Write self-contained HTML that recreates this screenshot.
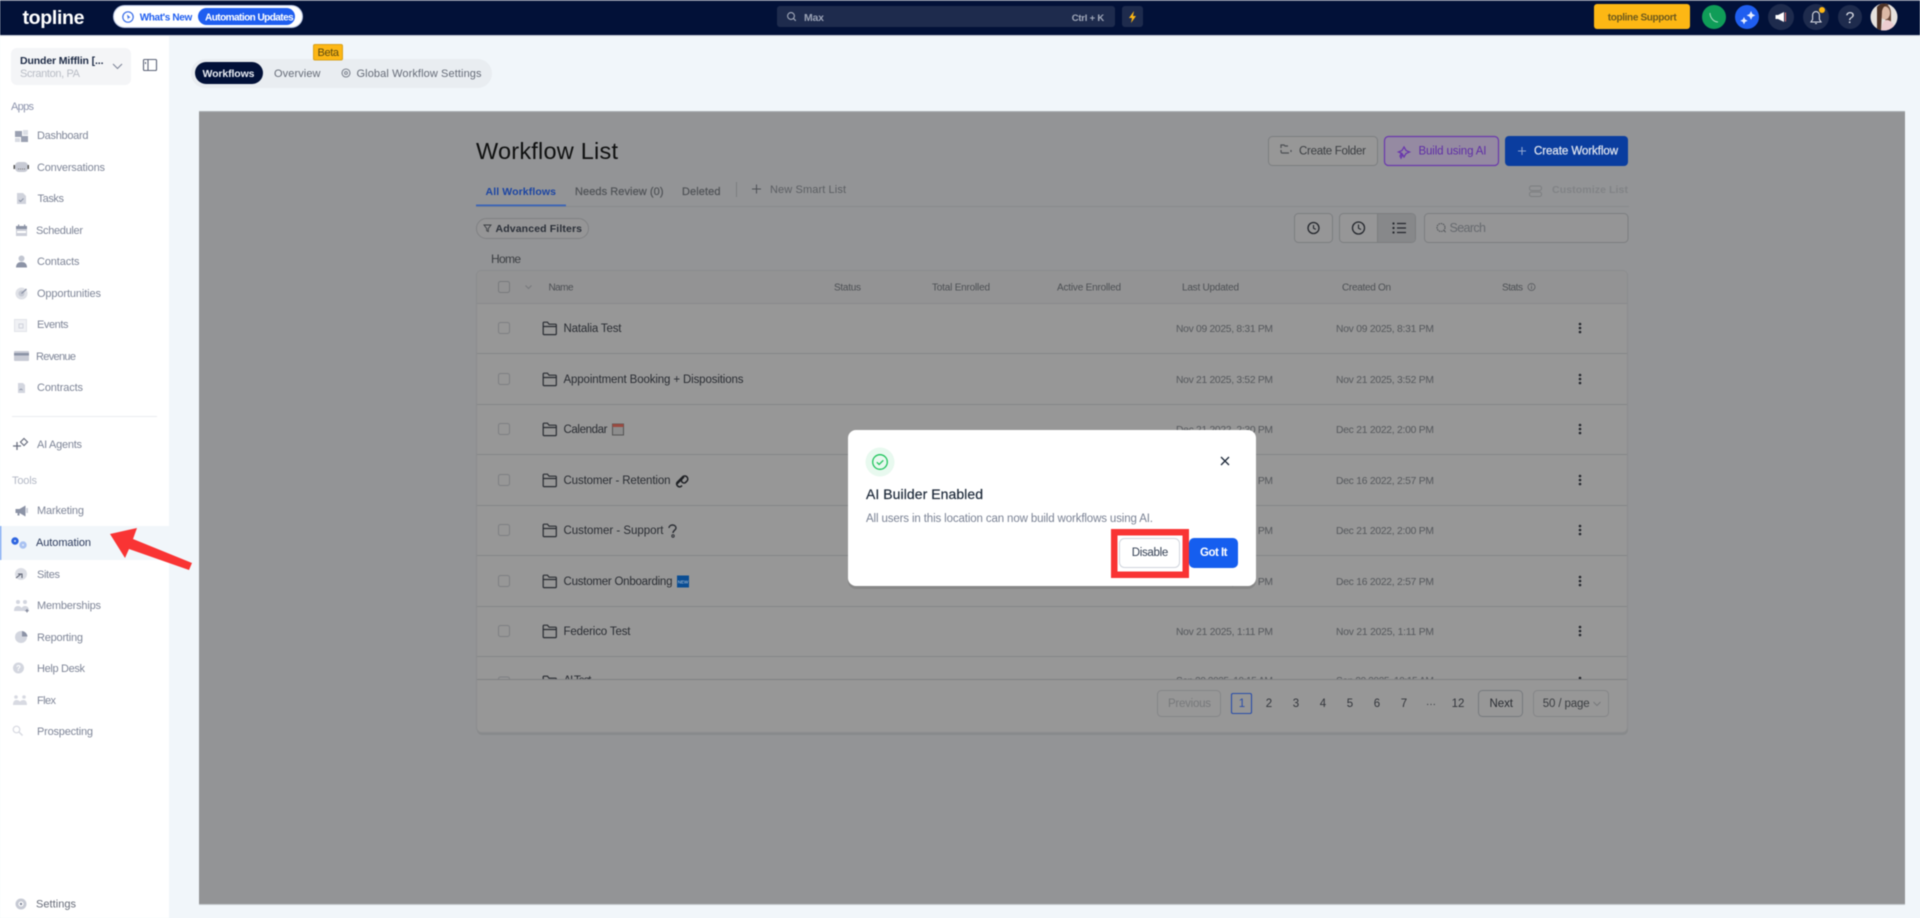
<!DOCTYPE html>
<html lang="en">
<head>
<meta charset="utf-8">
<title>Workflow List</title>
<style>
html,body{margin:0;padding:0;width:1920px;height:918px;overflow:hidden;background:#f1f6fa}
svg{display:block;filter:blur(.45px)}
text{font-family:"Liberation Sans",Arial,sans-serif;white-space:pre}
.s{font-size:11px;fill:#7f8698}
.h{font-size:10px;fill:#4d5054}
.r{font-size:11.5px;fill:#2a2d33}
.d{font-size:10.3px;fill:#55585c}
.p{font-size:11.5px;fill:#33363c;text-anchor:middle}
</style>
</head>
<body>
<svg width="1920" height="918" viewBox="0 0 1920 918" xmlns="http://www.w3.org/2000/svg">
<rect width="1920" height="918" fill="#f1f6fa"/>
<!-- top bar -->
<rect width="1920" height="35" fill="#021138"/>
<rect width="1920" height="1" fill="#6d7489"/>
<rect y="35" width="1920" height="1" fill="#c9ced8"/>
<text x="22.5" y="24" font-size="19.5" font-weight="700" fill="#fff" textLength="62">topline</text>
<rect x="113.5" y="5.5" width="189" height="22" rx="11" fill="#fff" stroke="#b9c6e4"/>
<rect x="198" y="8" width="97" height="17" rx="8.5" fill="#1f5ef0"/>
<circle cx="128" cy="17" r="5.2" fill="none" stroke="#3b6fe8" stroke-width="1.2"/>
<path d="M127 14.5l3.5 3-2 .5-.5 2z" fill="#3b6fe8"/>
<text x="139.7" y="20.5" font-size="10" font-weight="700" fill="#1f5ef0" textLength="52.6">What's New</text>
<text x="205" y="20.5" font-size="10" font-weight="700" fill="#fff" textLength="88.7">Automation Updates</text>
<!-- search -->
<rect x="777" y="6" width="338" height="21" rx="3" fill="#1e2b4d"/>
<circle cx="791" cy="16" r="3.4" fill="none" stroke="#a3aabb" stroke-width="1.1"/>
<path d="M793.5 18.5l2.3 2.3" stroke="#a3aabb" stroke-width="1.1"/>
<text x="804" y="21" font-size="10.5" font-weight="700" fill="#9aa2b5" textLength="20">Max</text>
<text x="1071.7" y="21" font-size="9.5" font-weight="700" fill="#a3aabb" textLength="32.5">Ctrl + K</text>
<rect x="1122" y="6" width="21" height="21" rx="3" fill="#1e2b4d"/>
<path d="M1134 11l-5 7h3l-1 5 5-7h-3z" fill="#fdb714"/>
<!-- right -->
<rect x="1594" y="4" width="96" height="25" rx="3" fill="#fdb714"/>
<text x="1607.7" y="20.5" font-size="10" font-weight="700" fill="#6e5a1c" textLength="69">topline Support</text>
<circle cx="1714" cy="17" r="12" fill="#0f9d58"/>
<path d="M1710 13c0 5 4 9 8 9" fill="none" stroke="#a6dcc0" stroke-width="1"/>
<circle cx="1747" cy="17" r="12" fill="#1f5ef0"/>
<path d="M1751 11l1.400 3 3 1.400-3 1.400-1.400 3-1.400-3-3-1.400 3-1.400zM1744 17l1.200 2.500 2.500 1.200-2.500 1.200-1.200 2.500-1.200-2.500-2.500-1.200 2.500-1.200z" fill="#e6edff"/>
<circle cx="1781" cy="17" r="13" fill="#1e2b4d"/>
<path d="M1778 15l6-3v10l-6-3h-2.500v-4z" fill="#fff"/><path d="M1785.500 12.500v9" stroke="#e67a7a" stroke-width="1"/>
<circle cx="1816" cy="17" r="13" fill="#1e2b4d"/>
<path d="M1811 22h10l-1.600-2.500V15a3.400 3.400 0 0 0-6.800 0v4.500zM1815 23.500h2" fill="none" stroke="#d9dce4" stroke-width="1.100"/>
<circle cx="1822" cy="10" r="3" fill="#fdb714"/>
<circle cx="1850" cy="17" r="12" fill="#1e2b4d"/>
<text x="1850" y="23" font-size="16" fill="#d9dce4" text-anchor="middle">?</text>
<clipPath id="av"><circle cx="1884" cy="17" r="13.5"/></clipPath>
<g clip-path="url(#av)">
<rect x="1870" y="3" width="28" height="28" fill="#e6e2de"/>
<path d="M1880 4c6-2 11 2 11 9v18h-4l-2-14z" fill="#6a4a3a"/>
<ellipse cx="1885" cy="13" rx="5" ry="6.500" fill="#dcb9a5"/>
<path d="M1877 7c3-4 9-5 12-2-4 0-6 2-7 6l-1 20h-4z" fill="#4d3226"/>
<path d="M1881 31c1-8 3-11 6-11s7 3 9 11z" fill="#eccdd0"/>
</g>
<!-- sidebar -->
<rect y="36" width="169" height="882" fill="#fff"/>
<rect x="11" y="48" width="120" height="37" rx="6" fill="#f4f5f7"/>
<text x="20" y="64" font-size="10.5" font-weight="700" fill="#1d2a45" textLength="83.5">Dunder Mifflin [...</text>
<text x="20" y="77" font-size="11" fill="#b9bdc6" textLength="60">Scranton, PA</text>
<path d="M113 64l4.500 4.500 4.500-4.500" fill="none" stroke="#7f8698" stroke-width="1.100"/>
<rect x="143.500" y="59.500" width="13" height="11" rx="1" fill="none" stroke="#5d6478" stroke-width="1.100"/>
<path d="M148 60v10" stroke="#5d6478" stroke-width="1.100"/>
<path d="M145.500 62v2" stroke="#5d6478" stroke-width="1.100"/>
<text x="11" y="110" font-size="11" fill="#8d94ad" textLength="23">Apps</text>
<g>
<rect x="15" y="131" width="7" height="6" fill="#9aa0b1"/><rect x="23" y="130" width="5" height="5" fill="#dcdfe6"/><rect x="15" y="138" width="5" height="4" fill="#d8dbe3"/><rect x="21" y="136" width="7" height="6" fill="#9aa0b1"/>
<rect x="15" y="162" width="13" height="10" rx="4" fill="#c7cad4"/><rect x="13.500" y="165" width="1.500" height="4" fill="#555"/><rect x="27.500" y="165" width="1.500" height="4" fill="#555"/><path d="M18 169h7" stroke="#777" stroke-dasharray="1 1"/>
<path d="M17 193h6l3 3v8h-9z" fill="#d0d3dc"/><path d="M19 200l1.500 1.500 3-3" stroke="#8c93a6" fill="none"/>
<rect x="16" y="226" width="11" height="10" fill="#cbced8"/><rect x="16" y="226" width="11" height="3" fill="#8c93a6"/><rect x="17" y="231" width="9" height="2" fill="#fff"/><rect x="18" y="224.500" width="1.200" height="2" fill="#8c93a6"/><rect x="24" y="224.500" width="1.200" height="2" fill="#8c93a6"/>
<circle cx="21.500" cy="258.500" r="3" fill="#c2c6d1"/><path d="M16 267.500c0-4 2.500-5.500 5.500-5.500s5.500 1.500 5.500 5.500z" fill="#8c93a6"/>
<circle cx="21.500" cy="293.500" r="6" fill="#dfe1e7"/><circle cx="21.500" cy="293.500" r="3" fill="#c5c8d2"/><path d="M21.500 293.500l5-4.500" stroke="#8c93a6" stroke-width="1.200"/>
<rect x="14.500" y="319.500" width="12" height="12" fill="#f0f1f4" stroke="#e2e4ea"/><rect x="19" y="324" width="4" height="4" fill="none" stroke="#d0d3dc"/>
<rect x="14" y="351" width="15" height="10" rx="1" fill="#c8cbd5"/><rect x="14" y="353" width="15" height="2.500" fill="#8c93a6"/>
<path d="M18 383h5l2 2v8h-7z" fill="#d3d6df"/><path d="M19.500 390l1.500-1 1.500 1" stroke="#8c93a6" fill="none" stroke-width=".8"/>
<rect x="12" y="416" width="145" height="1" fill="#ebedf0"/>
<path d="M17 442v8M13 446h8" stroke="#6b7080" stroke-width="1.300"/><path d="M24 438.500l3.500 3.500-3.500 3.500-3.500-3.500z" fill="none" stroke="#6b7080" stroke-width="1.200"/>
<path d="M15.500 509h4l6-3.500v11l-6-3.500v2.500h-2v-2.500h-2z" fill="#8c93a6"/><rect x="26" y="508" width="2" height="5" fill="#d0d3dc"/>
</g>
<text class="s" x="37" y="139" textLength="51.500">Dashboard</text>
<text class="s" x="37" y="171" textLength="68">Conversations</text>
<text class="s" x="37.500" y="202" textLength="26.500">Tasks</text>
<text class="s" x="36" y="234" textLength="47">Scheduler</text>
<text class="s" x="37" y="265" textLength="42.500">Contacts</text>
<text class="s" x="37" y="297" textLength="64">Opportunities</text>
<text class="s" x="37" y="328" textLength="31.500">Events</text>
<text class="s" x="36" y="360" textLength="40">Revenue</text>
<text class="s" x="37" y="391" textLength="46">Contracts</text>
<text class="s" x="37" y="448" textLength="45">AI Agents</text>
<text x="12" y="484" font-size="11" fill="#b4b9c6" textLength="25">Tools</text>
<text class="s" x="37" y="514" textLength="47">Marketing</text>
<rect y="526" width="169" height="34" fill="#f1f6fa"/>
<rect y="526" width="1.200" height="34" fill="#6b9cf2"/>
<circle cx="15" cy="541" r="2.300" fill="none" stroke="#2f66e0" stroke-width="2.800"/>
<circle cx="23" cy="545" r="2.300" fill="none" stroke="#a9c2f2" stroke-width="2.800"/>
<text x="36" y="546" font-size="11" fill="#2c3a5c" textLength="55">Automation</text>
<circle cx="21" cy="574" r="6" fill="#dcdee5"/><path d="M16 578l5-4M18 574h4v4" stroke="#5f6474" fill="none" stroke-width="1.100"/>
<text class="s" x="37" y="578" textLength="23">Sites</text>
<path d="M14 611c0-4 2-5 4-5s3 1 3.500 2c.5-1 2-2 3.500-2 2 0 4 1 4 5z" fill="#d3d6df"/><circle cx="18" cy="602" r="2" fill="#d3d6df"/><circle cx="25" cy="602" r="2" fill="#d3d6df"/><path d="M27 609v3.500M25.200 610.800h3.500" stroke="#7a8094"/>
<text class="s" x="37" y="609" textLength="64">Memberships</text>
<circle cx="21" cy="637" r="6" fill="#d3d6df"/><path d="M22 631a6 6 0 0 1 5.500 5.500H22z" fill="#8c93a6"/>
<text class="s" x="37" y="641" textLength="46">Reporting</text>
<circle cx="18.500" cy="668" r="5.500" fill="#d3d6df"/><text x="18.500" y="671" font-size="8" font-weight="700" fill="#fff" text-anchor="middle">?</text>
<text class="s" x="37" y="672" textLength="48">Help Desk</text>
<path d="M13 705c0-4 2-5 3.500-5s2.500 .5 3.500 1.500c1-1 2-1.500 3.500-1.500s3.500 1 3.500 5z" fill="#d8dae2"/><circle cx="16" cy="697" r="1.800" fill="#d8dae2"/><circle cx="24" cy="697" r="1.800" fill="#d8dae2"/>
<text class="s" x="37" y="704" textLength="19">Flex</text>
<circle cx="16.500" cy="729.500" r="3.300" fill="none" stroke="#d8dae2" stroke-width="1.200"/><path d="M19 732l3.500 3.500" stroke="#d8dae2" stroke-width="1.400"/>
<text class="s" x="37" y="735" textLength="56">Prospecting</text>
<circle cx="21" cy="904" r="4" fill="none" stroke="#c7cad4" stroke-width="3"/><circle cx="21" cy="904" r="1.200" fill="#7f8698"/>
<text x="36" y="907.500" font-size="11" fill="#676c79" textLength="40">Settings</text>
<!-- tabs -->
<rect x="191" y="59" width="301" height="29" rx="14.500" fill="#e9edf1"/>
<rect x="195" y="62" width="68" height="22" rx="11" fill="#021138"/>
<text x="202.500" y="77" font-size="10.5" font-weight="700" fill="#e9edf4" textLength="52">Workflows</text>
<text x="274" y="77" font-size="11" fill="#666c78" textLength="46.500">Overview</text>
<circle cx="346" cy="73" r="4" fill="none" stroke="#7b818d" stroke-width="1.100"/><circle cx="346" cy="73" r="1.400" fill="none" stroke="#7b818d"/>
<text x="356.500" y="77" font-size="11" fill="#666c78" textLength="125">Global Workflow Settings</text>
<rect x="313.500" y="44.500" width="29" height="15.500" rx="1.500" fill="#fdb714" stroke="#d9a21b"/>
<text x="317.500" y="56" font-size="11" fill="#5c4a10" textLength="21.500">Beta</text>
<!-- overlay area -->
<rect x="199" y="111" width="1706" height="793.500" fill="#939496"/>
<rect x="199" y="111" width="1706" height="1" fill="#abb0b2"/>
<rect x="199" y="904" width="1706" height="1" fill="#c5cbce"/>
<text x="476" y="159" font-size="23.500" fill="#0f1010" textLength="142">Workflow List</text>
<!-- header buttons -->
<rect x="1268.500" y="136.500" width="109" height="29" rx="4" fill="#979797" stroke="#7c7e80"/>
<path d="M1281 148v-3h3l1 1h3M1281 150c0 2 0 3 1 3h7M1291 150v2" fill="none" stroke="#4d5054" stroke-width="1.200"/>
<text x="1299" y="154.500" font-size="11.500" fill="#3b3e42" textLength="67">Create Folder</text>
<rect x="1384.500" y="136.500" width="114" height="29" rx="4" fill="#958aa2" stroke="#6a38ad" stroke-width="1.200"/>
<path d="M1404 147l2 3.500 3.500 1.500-3.500 1.500-2 3.500-2-3.500-3.500-1.500 3.500-1.500zM1401 154l1 2-1 2-1-2z" fill="none" stroke="#6a38ad" stroke-width="1.300"/>
<text x="1418.500" y="154.500" font-size="11.500" fill="#5f2ea6" textLength="68">Build using AI</text>
<rect x="1505" y="136" width="123" height="30" rx="4" fill="#0a3d9f"/>
<path d="M1522 147v8M1518 151h8" stroke="#8ea3cf" stroke-width="1.100"/>
<text x="1534" y="154.500" font-size="11.500" fill="#dfe4ee" stroke="#dfe4ee" stroke-width=".25" textLength="84">Create Workflow</text>
<!-- tab row -->
<text x="485.500" y="195" font-size="10.500" font-weight="700" fill="#1c45a3" textLength="70.500">All Workflows</text>
<text x="575" y="195" font-size="11" fill="#4f5256" stroke="#4f5256" stroke-width=".2" textLength="88.500">Needs Review (0)</text>
<text x="682" y="195" font-size="11" fill="#4f5256" stroke="#4f5256" stroke-width=".2" textLength="38.500">Deleted</text>
<rect x="736" y="182" width="1" height="15" fill="#7c7e80"/>
<path d="M756.500 184.500v9M752 189h9" stroke="#4f5256" stroke-width="1"/>
<text x="770" y="193" font-size="11" fill="#5c5f63" textLength="76">New Smart List</text>
<rect x="476" y="206" width="1153" height="1" fill="#888a8c"/>
<rect x="476" y="204.500" width="90" height="1.800" fill="#3a64b8"/>
<rect x="1529.500" y="186" width="12" height="4.500" rx="2" fill="none" stroke="#7c7e80"/><rect x="1529.500" y="192" width="12" height="4.500" rx="2" fill="none" stroke="#7c7e80"/>
<text x="1552" y="193" font-size="10.500" font-weight="700" fill="#818386" textLength="76">Customize List</text>
<!-- filters row -->
<rect x="476.500" y="218.500" width="112" height="20" rx="10" fill="#959596" stroke="#808183"/>
<path d="M484 225h7l-2.700 3.500v3l-1.600-.8v-2.200z" fill="none" stroke="#3b3e42" stroke-width=".9"/>
<text x="495.500" y="232" font-size="10.500" font-weight="700" fill="#2a2f38" textLength="86.500">Advanced Filters</text>
<rect x="1294.500" y="213.500" width="38" height="29" rx="4" fill="#969697" stroke="#7c7e80"/>
<circle cx="1313.500" cy="228" r="5.500" fill="none" stroke="#24272d" stroke-width="1.300"/><path d="M1313.500 225v3.200l2.300 1.200" fill="none" stroke="#24272d" stroke-width="1.100"/>
<rect x="1339.500" y="213.500" width="76" height="29" rx="4" fill="#969697" stroke="#7c7e80"/>
<path d="M1377 214h34a4 4 0 0 1 4 4v20a4 4 0 0 1-4 4h-34z" fill="#87888a"/>
<rect x="1377" y="214" width="1" height="28" fill="#7c7e80"/>
<circle cx="1358.500" cy="228" r="6" fill="none" stroke="#24272d" stroke-width="1.300"/><path d="M1358.500 224.500v3.700l2.500 1.300" fill="none" stroke="#24272d" stroke-width="1.100"/>
<path d="M1397 223.500h9M1397 228h9M1397 232.500h9" stroke="#24272d" stroke-width="1.300"/><circle cx="1393.500" cy="223.500" r="1.100" fill="#24272d"/><circle cx="1393.500" cy="228" r="1.100" fill="#24272d"/><circle cx="1393.500" cy="232.500" r="1.100" fill="#24272d"/>
<rect x="1424.500" y="213.500" width="203.500" height="29" rx="4" fill="#959596" stroke="#7c7e80"/>
<circle cx="1441" cy="227.500" r="4" fill="none" stroke="#55585c" stroke-width="1.100" stroke-dasharray="1.600 .7"/><path d="M1444 230.500l1.700 1.700" stroke="#55585c"/>
<text x="1449.500" y="232" font-size="12.500" fill="#676a6f" textLength="36.500">Search</text>
<text x="491" y="263" font-size="12" fill="#3b3e42" textLength="30">Home</text>
<!-- table card -->
<rect x="477" y="273" width="1151" height="462" rx="5" fill="#808184" opacity=".55"/>
<rect x="476.500" y="270.500" width="1151" height="462" rx="5" fill="#979797" stroke="#8b8c8e"/>
<path d="M477 303v-28a4 4 0 0 1 4-4h1142a4 4 0 0 1 4 4v28z" fill="#939394"/>
<rect x="477" y="303" width="1150" height="1" fill="#898a8c"/>
<rect x="498.500" y="281.500" width="11" height="11" rx="2" fill="none" stroke="#77797c"/>
<path d="M525.500 285.500l3 3 3-3" fill="none" stroke="#77797c"/>
<text class="h" x="548.500" y="290.500" textLength="25">Name</text>
<text class="h" x="834" y="290.500" textLength="27">Status</text>
<text class="h" x="932" y="290.500" textLength="58">Total Enrolled</text>
<text class="h" x="1057" y="290.500" textLength="64">Active Enrolled</text>
<text class="h" x="1182" y="290.500" textLength="57">Last Updated</text>
<text class="h" x="1342" y="290.500" textLength="49">Created On</text>
<text class="h" x="1502" y="290.500" textLength="21">Stats</text>
<circle cx="1531.500" cy="287" r="3.500" fill="none" stroke="#55585c" stroke-width=".8"/><path d="M1531.500 286v3M1531.500 284.500v.8" stroke="#55585c" stroke-width=".8"/>
<defs>
<path id="fo" d="M.7 12.300V1.500q0-.8.8-.8h3.500l1.500 2h6.500q.8 0 .8.8v8.800q0 .8-.8.8H1.500q-.8 0-.8-.8zM.7 5h13" fill="none" stroke="#2a2d33" stroke-width="1.200"/>
<rect id="cb" width="11" height="11" rx="2" fill="none" stroke="#7d7f82"/>
<g id="dt"><circle r="1.300" cy="-4" fill="#24272d"/><circle r="1.300" fill="#24272d"/><circle r="1.300" cy="4" fill="#24272d"/></g>
</defs>
<clipPath id="tb"><rect x="477" y="304" width="1150" height="375"/></clipPath>
<g clip-path="url(#tb)">
<rect x="477" y="353" width="1150" height="1" fill="#858688"/><rect x="477" y="404" width="1150" height="1" fill="#858688"/><rect x="477" y="454" width="1150" height="1" fill="#858688"/><rect x="477" y="505" width="1150" height="1" fill="#858688"/><rect x="477" y="555" width="1150" height="1" fill="#858688"/><rect x="477" y="606" width="1150" height="1" fill="#858688"/><rect x="477" y="656" width="1150" height="1" fill="#858688"/>
<use href="#cb" x="498.500" y="322.500"/><use href="#fo" x="542.500" y="321.500"/><text class="r" x="563.500" y="332" textLength="58">Natalia Test</text><text class="d" x="1176" y="332" textLength="97">Nov 09 2025, 8:31 PM</text><text class="d" x="1336" y="332" textLength="98">Nov 09 2025, 8:31 PM</text><use href="#dt" x="1580" y="328"/>
<use href="#cb" x="498.500" y="373.500"/><use href="#fo" x="542.500" y="372.500"/><text class="r" x="563.500" y="383" textLength="180">Appointment Booking + Dispositions</text><text class="d" x="1176" y="383" textLength="97">Nov 21 2025, 3:52 PM</text><text class="d" x="1336" y="383" textLength="98">Nov 21 2025, 3:52 PM</text><use href="#dt" x="1580" y="379"/>
<use href="#cb" x="498.500" y="423.500"/><use href="#fo" x="542.500" y="422.500"/><text class="r" x="563.500" y="433" textLength="44">Calendar</text><text class="d" x="1176" y="433" textLength="97">Dec 21 2022, 2:30 PM</text><text class="d" x="1336" y="433" textLength="98">Dec 21 2022, 2:00 PM</text><use href="#dt" x="1580" y="429"/>
<rect x="612.500" y="424" width="11" height="11" fill="#8d8d8d" stroke="#555"/><rect x="612.500" y="424" width="11" height="3" fill="#9a4a40"/>
<use href="#cb" x="498.500" y="474.500"/><use href="#fo" x="542.500" y="473.500"/><text class="r" x="563.500" y="484" textLength="107">Customer - Retention</text><text class="d" x="1176" y="484" textLength="97">Dec 16 2022, 2:57 PM</text><text class="d" x="1336" y="484" textLength="98">Dec 16 2022, 2:57 PM</text><use href="#dt" x="1580" y="480"/>
<path d="M677 484l5-5M684 477l-2 2a2.500 2.500 0 0 0 3.500 3.500l1-1a3 3 0 0 0-3.500-5l-6 6a3 3 0 0 0 4 4l1-1" fill="none" stroke="#1e2024" stroke-width="1.500"/>
<use href="#cb" x="498.500" y="524.500"/><use href="#fo" x="542.500" y="523.500"/><text class="r" x="563.500" y="534" textLength="100">Customer - Support</text><text class="d" x="1176" y="534" textLength="97">Dec 21 2022, 2:00 PM</text><text class="d" x="1336" y="534" textLength="98">Dec 21 2022, 2:00 PM</text><use href="#dt" x="1580" y="530"/>
<path d="M669 528c0-4 7-4 7 0 0 2-3 2.500-3 5" fill="none" stroke="#2a2d33" stroke-width="1.400"/><circle cx="673" cy="536" r="1.200" fill="none" stroke="#2a2d33"/>
<use href="#cb" x="498.500" y="575.500"/><use href="#fo" x="542.500" y="574.500"/><text class="r" x="563.500" y="585" textLength="109">Customer Onboarding</text><text class="d" x="1176" y="585" textLength="97">Dec 16 2022, 2:57 PM</text><text class="d" x="1336" y="585" textLength="98">Dec 16 2022, 2:57 PM</text><use href="#dt" x="1580" y="581"/>
<rect x="677" y="575.500" width="12" height="12" fill="#0a4d93"/><text x="683" y="583.500" font-size="4.500" fill="#bcd" text-anchor="middle">NEW</text>
<use href="#cb" x="498.500" y="625.500"/><use href="#fo" x="542.500" y="624.500"/><text class="r" x="563.500" y="635" textLength="67">Federico Test</text><text class="d" x="1176" y="635" textLength="97">Nov 21 2025, 1:11 PM</text><text class="d" x="1336" y="635" textLength="98">Nov 21 2025, 1:11 PM</text><use href="#dt" x="1580" y="631"/>
<use href="#cb" x="498.500" y="677"/><use href="#fo" x="542.500" y="675.500"/><text class="r" x="563.500" y="684" textLength="28">AI Test</text><text class="d" x="1176" y="684" textLength="97">Sep 20 2025, 10:15 AM</text><text class="d" x="1336" y="684" textLength="98">Sep 20 2025, 10:15 AM</text><use href="#dt" x="1580" y="682"/>
</g>
<rect x="477" y="679" width="1150" height="1" fill="#7f8082"/>
<!-- pagination -->
<rect x="1157.500" y="690.500" width="63" height="26" rx="4" fill="none" stroke="#858688"/>
<text x="1168" y="707" font-size="11.500" fill="#77797b" textLength="43">Previous</text>
<rect x="1231.500" y="693.500" width="20" height="20" rx="1.500" fill="none" stroke="#2a4da8" stroke-width="1.100"/>
<text class="p" x="1242" y="707" style="fill:#2a4da8">1</text>
<text class="p" x="1269" y="707">2</text><text class="p" x="1296" y="707">3</text><text class="p" x="1323" y="707">4</text><text class="p" x="1350" y="707">5</text><text class="p" x="1377" y="707">6</text><text class="p" x="1404" y="707">7</text><text class="p" x="1431" y="707" style="font-size:10px">···</text><text class="p" x="1458" y="707">12</text>
<rect x="1478.500" y="690.500" width="44" height="26" rx="4" fill="none" stroke="#777a7e"/>
<text x="1489.500" y="707" font-size="11.500" fill="#2a2d33" textLength="23.500">Next</text>
<rect x="1533.500" y="690.500" width="75" height="26" rx="4" fill="none" stroke="#858688"/>
<text x="1542.700" y="707" font-size="11.500" fill="#3b3e42" textLength="47">50 / page</text>
<path d="M1593.500 702l3.500 3.500 3.500-3.500" fill="none" stroke="#77797c"/>
<!-- modal -->
<rect x="848" y="430" width="408" height="156" rx="8" fill="#000" opacity=".1" transform="translate(0 3)"/>
<rect x="848" y="430" width="408" height="156" rx="8" fill="#fff"/>
<circle cx="880" cy="462" r="14.500" fill="#e8f9ef"/>
<circle cx="880" cy="462" r="7.300" fill="none" stroke="#22c55e" stroke-width="1.300"/>
<path d="M876.800 462.200l2.300 2.300 4.200-4.200" fill="none" stroke="#22c55e" stroke-width="1.300"/>
<path d="M1221 457l8 8M1229 457l-8 8" stroke="#1d2939" stroke-width="1.300"/>
<text x="866" y="499" font-size="14" fill="#1d2939" stroke="#1d2939" stroke-width=".2" textLength="117">AI Builder Enabled</text>
<text x="866" y="522" font-size="11.500" fill="#7a8294" textLength="287">All users in this location can now build workflows using AI.</text>
<rect x="1114.250" y="532.250" width="71.500" height="42.500" fill="none" stroke="#f93434" stroke-width="6.500"/>
<rect x="1119.500" y="538.500" width="60" height="29" rx="5" fill="#fff" stroke="#d0d5dd"/>
<text x="1131.700" y="556" font-size="11.500" fill="#344054" textLength="36.600">Disable</text>
<rect x="1189" y="538" width="49" height="30" rx="5" fill="#155eef"/>
<text x="1200" y="556" font-size="11.500" font-weight="700" fill="#fff" textLength="27.500">Got It</text>
<!-- arrow -->
<path d="M110 534L137 528 133 539 192 563 189 570 129 549 125 558Z" fill="#f93434"/>
</svg>
</body>
</html>
